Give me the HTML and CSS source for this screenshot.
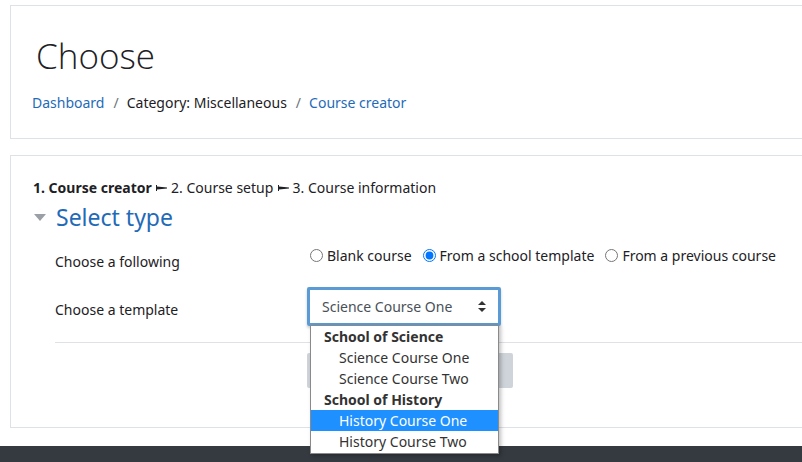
FILE: index.html
```html
<!DOCTYPE html>
<html>
  <head>
    <title>Choose</title>
    <meta charset="utf-8">
    <link rel="stylesheet" href="styles.css">
  </head>
  <body>
    <div class="page">
      <!-- encabezado -->
      <div class="card head">
        <h1>Choose</h1>
        <nav class="crumbs">
          <a href="#">Dashboard</a><span class="sep">/</span><span>Category: Miscellaneous</span><span class="sep">/</span><a href="#">Course creator</a>
        </nav>
      </div>

      <div class="card main">
        <p class="steps"><b>1. Course creator</b> <svg class="stp" width="11" height="8" viewBox="0 0 11 8"><path d="M0.5 1v6" stroke="#1d2125"/><path d="M1 2.4L11 3.6v0.8L1 5.6z" fill="#1d2125"/></svg> 2. Course setup <svg class="stp" width="11" height="8" viewBox="0 0 11 8"><path d="M0.5 1v6" stroke="#1d2125"/><path d="M1 2.4L11 3.6v0.8L1 5.6z" fill="#1d2125"/></svg> 3. Course information</p>
        <h2 class="legend"><span class="caret"></span>Select type</h2>

        <div class="row first">
          <label class="lbl">Choose a following</label>
          <div class="radios">
            <label><input type="radio" name="tipo"> Blank course</label>
            <label><input type="radio" name="tipo" checked> From a school template</label>
            <label><input type="radio" name="tipo"> From a previous course</label>
          </div>
        </div>

        <div class="row tpl">
          <label class="lbl">Choose a template</label>
          <div class="selwrap">
            <div class="select">Science Course One
              <svg width="8" height="11" viewBox="0 0 8 11"><path d="M4 0L8 4H0z M0 7H8L4 11z" fill="#333"/></svg>
            </div>
            <ul class="dropdown">
              <li class="grp">School of Science</li>
              <li>Science Course One</li>
              <li>Science Course Two</li>
              <li class="grp">School of History</li>
              <li class="on">History Course One</li>
              <li>History Course Two</li>
            </ul>
          </div>
        </div>

        <hr class="line">
        <div class="buttons"><button class="btn"></button></div>
      </div>
    </div>
    <footer class="foot"></footer>
  </body>
</html>
```
FILE: styles.css
```css
* {box-sizing: border-box;}
body {margin: 0; background: #fff; color: #1d2125; font-family: 'Noto Sans', 'Open Sans', sans-serif; font-size: 14px; overflow: hidden; height: 462px;}
a {color: #1f6bb8; text-decoration: none;}

.page {padding: 5px 0 0 10px;}
.card {border: 1px solid #dee2e6; border-right: none; background: #fff;}

.head {height: 134px; padding: 28px 0 0 25px;}
.head h1 {margin: 0; font-family: 'Open Sans', 'Noto Sans', sans-serif; font-size: 35px; font-weight: 300; line-height: 44px; color: #1d2125;}
.crumbs {margin: 15px 0 0 -4px; font-size: 14px;}
.crumbs .sep {margin: 0 8px 0 9px; color: #6a737b;}

.main {margin-top: 16px; height: 273px; padding: 22px 0 0 22px;}
.steps {margin: 0; font-size: 14px; line-height: 20px;}
.stp {vertical-align: 1px; margin: 0 0 0 1px;}
.legend {margin: 4px 0 0; font-size: 23px; font-weight: 400; color: #1f6bb8; line-height: 30px; display: flex; align-items: center;}
.caret {width: 0; height: 0; border-left: 6px solid transparent; border-right: 6px solid transparent; border-top: 7px solid #9aa0a6; margin: 0 10px 0 1px;}

.row {display: flex; margin-left: 22px;}
.lbl {width: 252px; font-size: 14px;}
.first {margin-top: 20px;}
.radios {display: flex; gap: 8px; font-size: 14px; margin-top: -12px;}
.radios label {display: flex; align-items: center;}
.radios input {margin: 0 4px 0 3px; width: 13px; height: 13px;}

.tpl {margin-top: 21px; align-items: flex-start;}
.tpl .lbl {margin-top: 8px;}
.selwrap {position: relative; margin-top: -5px;}
.select {width: 194px; height: 39px; border: 3px solid #5b9bd5; border-radius: 2px; padding: 0 12px 0 12px; display: flex; align-items: center; justify-content: space-between; font-size: 14px; color: #495057; box-shadow: 0 2px 3px rgba(0,0,0,.2);}

.dropdown {position: absolute; left: 3px; top: 38px; width: 189px; margin: 0; padding: 0 0 1px; list-style: none; background: #fff; border: 1px solid #8a8a8a; box-shadow: 2px 2px 4px rgba(0,0,0,.25); z-index: 2; font-size: 14px; color: #333;}
.dropdown li {height: 21px; line-height: 21px; padding-left: 28px;}
.dropdown li.grp {font-weight: bold; padding-left: 13px;}
.dropdown li.on {background: #1e90ff; color: #fff;}

.line {margin: 16px 0 0 22px; border: 0; border-top: 1px solid #dee2e6;}
.buttons {margin: 10px 0 0 274px;}
.btn {width: 206px; height: 35px; border: 0; border-radius: 2px; background: #ced4da;}

.foot {margin-top: 18px; height: 20px; background: #343a40;}
```
